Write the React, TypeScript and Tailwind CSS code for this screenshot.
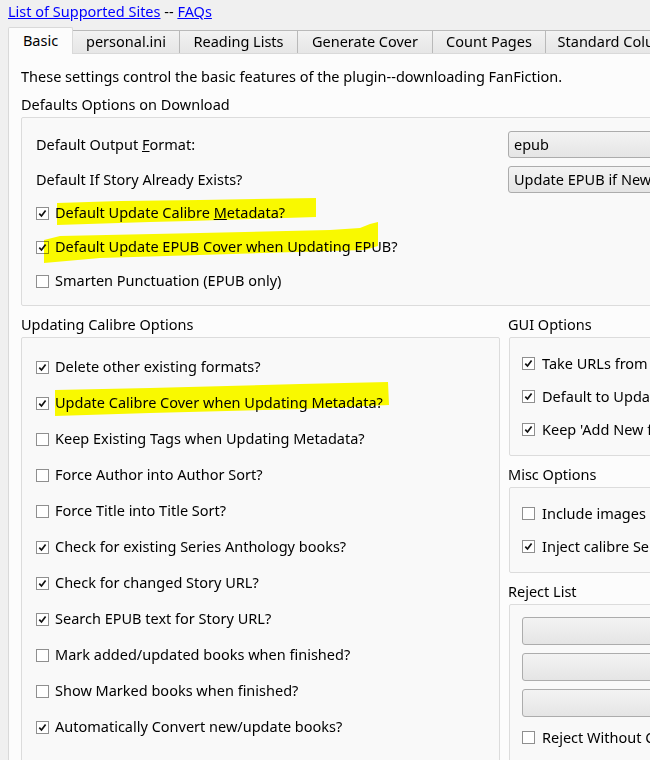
import React from "react";

type Opt = [string, boolean];

function Check({ checked }: { checked: boolean }) {
  return (
    <span className="w-[13px] h-[13px] border border-[#8f8f8f] bg-white flex items-center justify-center shrink-0">
      {checked && (
        <svg width="9" height="9" viewBox="0 0 9 9">
          <path d="M1.3 4.6 L3.5 7 L7.6 1.6" stroke="#111" strokeWidth="1.7" fill="none" />
        </svg>
      )}
    </span>
  );
}

function Row({ label, checked, h, gap = "gap-[6px]" }: { label: React.ReactNode; checked: boolean; h: string; gap?: string }) {
  return (
    <div className={`flex items-center ${gap} ${h} whitespace-nowrap`}>
      <Check checked={checked} />
      <span>{label}</span>
    </div>
  );
}

function Combo({ text }: { text?: string }) {
  return (
    <div className="w-[240px] h-[27px] rounded-[3px] border border-[#acacac] bg-gradient-to-b from-[#f3f3f3] to-[#e5e5e5] flex items-center px-[5px] whitespace-nowrap">
      {text}
    </div>
  );
}

const updating: Opt[] = [
  ["Delete other existing formats?", true],
  ["Update Calibre Cover when Updating Metadata?", true],
  ["Keep Existing Tags when Updating Metadata?", false],
  ["Force Author into Author Sort?", false],
  ["Force Title into Title Sort?", false],
  ["Check for existing Series Anthology books?", true],
  ["Check for changed Story URL?", true],
  ["Search EPUB text for Story URL?", true],
  ["Mark added/updated books when finished?", false],
  ["Show Marked books when finished?", false],
  ["Automatically Convert new/update books?", true],
];

const gui: Opt[] = [
  ["Take URLs from Clipboard?", true],
  ["Default to Update when books selected?", true],
  ["Keep 'Add New from URL(s)' dialog on top?", true],
];

const misc: Opt[] = [
  ["Include images in EPUBs?", false],
  ["Inject calibre Series when none found?", true],
];

const tabs = [
  { name: "personal.ini", w: "w-[107px]" },
  { name: "Reading Lists", w: "w-[118px]" },
  { name: "Generate Cover", w: "w-[135px]" },
  { name: "Count Pages", w: "w-[113px]" },
  { name: "Standard Columns", w: "w-[150px]" },
];

export default function App() {
  return (
    <div className="relative w-[650px] h-[760px] overflow-hidden bg-[#f0f0f0] text-black text-[14.5px] font-['Noto_Sans',sans-serif]">
      <div className="w-[820px] pl-[8px]">
        {/* links */}
        <div className="h-[27px] leading-[22px] whitespace-nowrap">
          <span className="text-[#0000ff] underline">List of Supported Sites</span> --{" "}
          <span className="text-[#0000ff] underline">FAQs</span>
        </div>

        {/* tabs */}
        <div className="flex items-end h-[26px]">
          <div className="relative z-10 -mb-px w-[65px] h-[27px] bg-[#fcfcfc] border-l border-t border-r border-[#d9d9d9] rounded-t-[2px] flex items-center justify-center">
            Basic
          </div>
          {tabs.map((t) => (
            <div
              key={t.name}
              className={`${t.w} h-[23px] bg-gradient-to-b from-[#f2f2f2] to-[#e6e6e6] border-t border-r border-[#b9b9b9] flex items-center justify-center whitespace-nowrap`}
            >
              {t.name}
            </div>
          ))}
        </div>

        {/* panel */}
        <div className="bg-[#fcfcfc] border-t border-l border-[#d9d9d9] pt-[11px] pl-[12px] h-[720px]">
          <div className="h-[24px] flex items-center whitespace-nowrap">
            These settings control the basic features of the plugin--downloading FanFiction.
          </div>
          <div className="mt-[4px] h-[24px] flex items-center">Defaults Options on Download</div>

          <div className="border border-[#dcdcdc] rounded-[2px] bg-[#f9f9f9] pt-[13px] pb-[7px] px-[14px]">
            <div className="flex items-center">
              <div className="w-[472px]">
                Default Output <span className="underline">F</span>ormat:
              </div>
              <Combo text="epub" />
            </div>
            <div className="flex items-center mt-[8px]">
              <div className="w-[472px]">Default If Story Already Exists?</div>
              <Combo text="Update EPUB if New Chapters" />
            </div>
            <div className="mt-[3px]">
              <Row
                h="h-[34px]"
                checked
                label={
                  <>
                    Default Update Calibre <span className="underline">M</span>etadata?
                  </>
                }
              />
              <Row h="h-[34px]" checked label="Default Update EPUB Cover when Updating EPUB?" />
              <Row h="h-[34px]" checked={false} label="Smarten Punctuation (EPUB only)" />
            </div>
          </div>

          <div className="flex gap-[8px]">
            {/* left column */}
            <div className="w-[479px]">
              <div className="mt-[7px] h-[24px] flex items-center">Updating Calibre Options</div>
              <div className="border border-[#dcdcdc] rounded-[2px] bg-[#f9f9f9] pt-[11px] px-[14px] h-[440px]">
                {updating.map(([l, c]) => (
                  <Row key={l} h="h-[36px]" checked={c} label={l} />
                ))}
              </div>
            </div>

            {/* right column */}
            <div className="w-[280px]">
              <div className="mt-[7px] h-[24px] flex items-center">GUI Options</div>
              <div className="ml-px border border-[#dcdcdc] rounded-[2px] bg-[#f9f9f9] py-[9px] pl-[12px]">
                {gui.map(([l, c]) => (
                  <Row key={l} h="h-[33px]" gap="gap-[7px]" checked={c} label={l} />
                ))}
              </div>

              <div className="mt-[7px] h-[24px] flex items-center">Misc Options</div>
              <div className="ml-px border border-[#dcdcdc] rounded-[2px] bg-[#f9f9f9] py-[9px] pl-[12px]">
                {misc.map(([l, c]) => (
                  <Row key={l} h="h-[33px]" gap="gap-[7px]" checked={c} label={l} />
                ))}
              </div>

              <div className="mt-[7px] h-[24px] flex items-center">Reject List</div>
              <div className="ml-px border border-[#dcdcdc] rounded-[2px] bg-[#f9f9f9] pt-[12px] pl-[12px] h-[200px]">
                <div className="flex flex-col gap-[8px]">
                  <div className="h-[28px] rounded-[3px] border border-[#acacac] bg-gradient-to-b from-[#f3f3f3] to-[#e5e5e5]" />
                  <div className="h-[28px] rounded-[3px] border border-[#acacac] bg-gradient-to-b from-[#f3f3f3] to-[#e5e5e5]" />
                  <div className="h-[28px] rounded-[3px] border border-[#acacac] bg-gradient-to-b from-[#f3f3f3] to-[#e5e5e5]" />
                </div>
                <div className="mt-[4px]">
                  <Row h="h-[33px]" gap="gap-[7px]" checked={false} label="Reject Without Confirmation?" />
                </div>
              </div>
            </div>
          </div>
        </div>
      </div>

      {/* yellow highlighter marks */}
      <svg className="absolute left-0 top-0 pointer-events-none mix-blend-multiply" width="650" height="760">
        <polygon
          fill="#ffff00"
          points="57,203 120,201 200,200 316,198 316,217 250,219 190,221 150,222 57,225"
        />
        <polygon
          fill="#ffff00"
          points="44,240 60,236 200,233 330,230 360,228 370,224 378,222 378,246 365,250 330,251 200,255 100,258 44,263"
        />
        <polygon
          fill="#ffff00"
          points="55,390 150,388 300,384 388,382 389,405 300,409 150,413 55,416"
        />
      </svg>
    </div>
  );
}
